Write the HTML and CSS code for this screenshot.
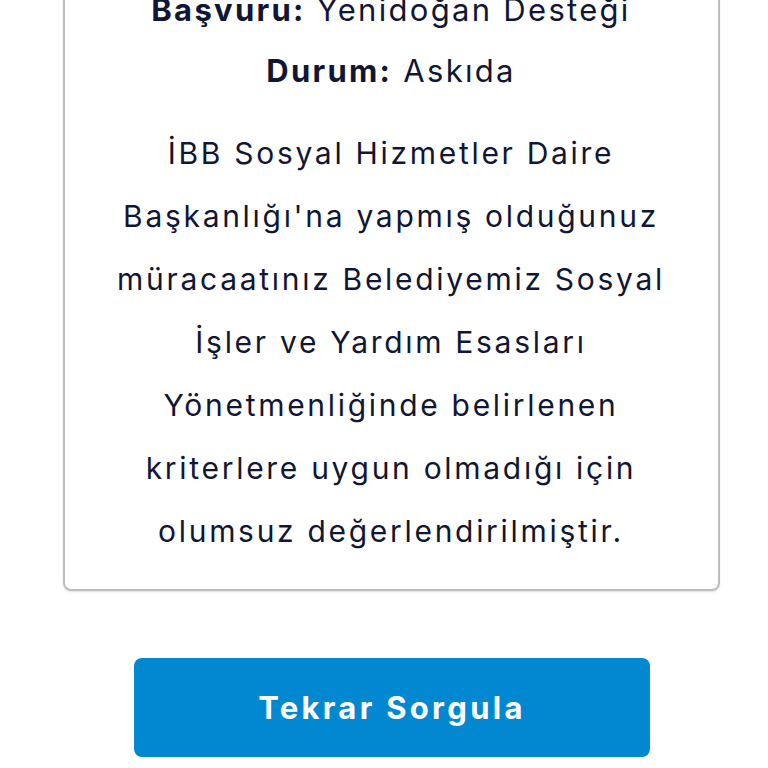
FILE: index.html
```html
<!DOCTYPE html>
<html lang="tr">
<head>
<meta charset="utf-8">
<link rel="stylesheet" href="styles.css">
</head>
<body>
<main class="page">
  <section class="card">
    <p class="meta"><strong>Başvuru:</strong> Yenidoğan Desteği</p>
    <p class="meta"><strong>Durum:</strong> Askıda</p>
    <p class="message">İBB Sosyal Hizmetler Daire<br>Başkanlığı'na yapmış olduğunuz<br>müracaatınız Belediyemiz Sosyal<br>İşler ve Yardım Esasları<br>Yönetmenliğinde belirlenen<br>kriterlere uygun olmadığı için<br>olumsuz değerlendirilmiştir.</p>
  </section>
  <button class="retry" type="button">Tekrar Sorgula</button>
</main>
</body>
</html>
```
FILE: styles.css
```css
html, body {
  margin: 0;
  padding: 0;
  background: #ffffff;
}
body {
  font-family: "Inter", "Noto Sans", sans-serif;
  color: #111634;
}
.page {
  width: 768px;
  margin-top: -43px;
  display: flex;
  flex-direction: column;
  align-items: center;
}
.card {
  box-sizing: border-box;
  width: 657px;
  margin-left: 14px;
  border: 2px solid #bdbdbd;
  border-radius: 8px;
  box-shadow: 0 1px 2px rgba(0, 0, 0, 0.12);
  padding: 20px 10px 26px;
  text-align: center;
}
.meta {
  margin: 0;
  font-size: 31px;
  line-height: 61px;
  letter-spacing: 2.3px;
  white-space: nowrap;
}
.meta strong {
  font-weight: 700;
}
.message {
  margin: 21px 0 0;
  font-size: 30px;
  line-height: 63px;
  letter-spacing: 2.7px;
  white-space: nowrap;
}
.retry {
  margin-top: 67px;
  width: 516px;
  height: 99px;
  margin-left: 16px;
  border: none;
  border-radius: 8px;
  background: #0288d1;
  color: #ffffff;
  font-family: "Inter", "Noto Sans", sans-serif;
  font-size: 31px;
  font-weight: 700;
  letter-spacing: 3.3px;
}
```
